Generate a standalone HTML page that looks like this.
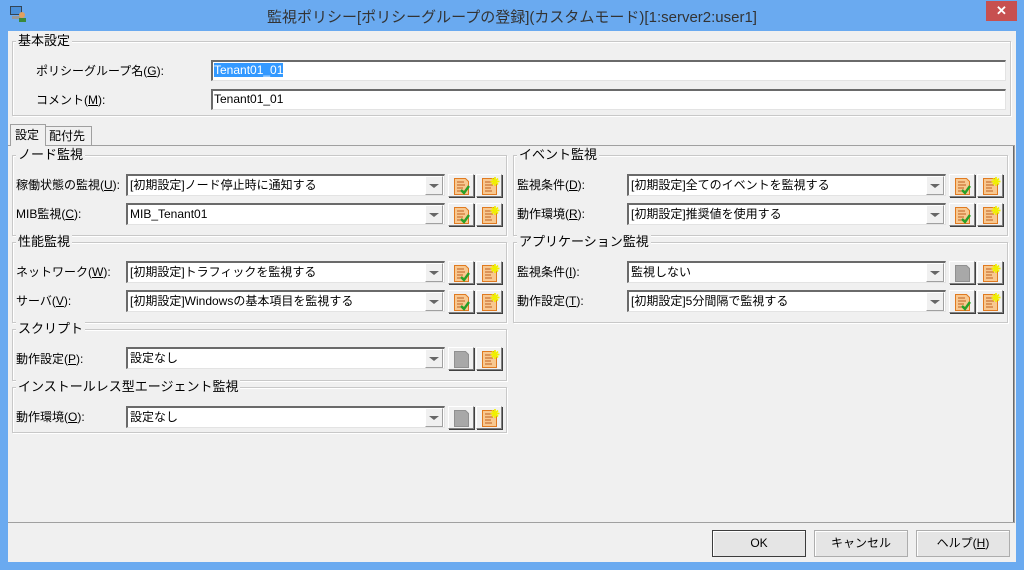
<!DOCTYPE html>
<html><head><meta charset="utf-8"><style>
*{box-sizing:border-box;margin:0;padding:0}
body{width:1024px;height:570px;background:#6aaaf0;position:relative;overflow:hidden;font-family:"Liberation Sans","Noto Sans CJK JP",sans-serif;font-size:12px;color:#000}
.a{position:absolute}
.client{left:8px;top:31px;width:1008px;height:531px;background:#f0f0f0}
.title{left:0;top:6px;width:1024px;text-align:center;font-size:15px;color:#333}
.close{left:986px;top:1px;width:31px;height:20px;background:#c75050;color:#fff;text-align:center;font-size:13px;line-height:20px;font-weight:bold}
.grp{border:1px solid #c8c8c8;box-shadow:inset 1px 1px 0 #fff,1px 1px 0 #fff}
.leg{background:#f0f0f0;padding:0 2px;top:-9px;left:3px;line-height:16px;font-size:13px}
.inp{background:#fff;border:1px solid #e3e3e3;border-top:2px solid #6a6a6a;border-left:2px solid #6a6a6a;padding-left:1px;line-height:17px;white-space:nowrap;overflow:hidden}
.sel{background:#fff;border:1px solid #e3e3e3;border-top:2px solid #6a6a6a;border-left:2px solid #6a6a6a;height:22px;line-height:19px;padding-left:2px}
.arr{position:absolute;right:1px;top:0px;width:18px;height:19px;background:#f0f0f0;border:1px solid;border-color:#fff #a0a0a0 #a0a0a0 #fff}
.arr:after{content:"";position:absolute;left:3px;top:7px;border:5px solid transparent;border-top:4px solid #666;border-bottom:0}
.btn{width:26px;height:23px;border:1px solid;border-color:#fff #808080 #808080 #fff;box-shadow:1px 1px 0 #404040;background:#f0f0f0}
.btn svg{position:absolute;left:4px;top:2px}
.lbl{line-height:16px}
.pb{border:1px solid #adadad;background:#e5e5e5;text-align:center;line-height:25px;width:94px;height:27px;box-shadow:inset 1px 1px 0 #fff}
</style></head><body>
<div class="a client"></div>
<svg class="a" style="left:9px;top:5px" width="18" height="18"><rect x="1" y="1" width="12" height="9" fill="#345" /><rect x="2" y="2" width="10" height="7" fill="#4a8fd8"/><rect x="3" y="11" width="9" height="3" fill="#999"/><circle cx="13" cy="10" r="3" fill="#e0a060"/><rect x="10" y="13" width="7" height="4" fill="#3a8a3a"/></svg>
<div class="a title">監視ポリシー[ポリシーグループの登録](カスタムモード)[1:server2:user1]</div>
<div class="a close">✕</div>

<div class="a grp" style="left:12px;top:41px;width:999px;height:75px"><div class="a leg">基本設定</div></div>
<div class="a lbl" style="left:36px;top:63px">ポリシーグループ名(<u>G</u>):</div>
<div class="a inp" style="left:211px;top:60px;width:795px;height:21px"><span style="background:#3399ff;color:#fff">Tenant01_01</span></div>
<div class="a lbl" style="left:36px;top:92px">コメント(<u>M</u>):</div>
<div class="a inp" style="left:211px;top:89px;width:795px;height:21px">Tenant01_01</div>

<div class="a" style="left:8px;top:145px;width:1007px;height:378px;border:1px solid #a0a0a0;border-left:0;box-shadow:inset -1px 0 0 #696969"></div>
<div class="a" style="left:10px;top:124px;width:36px;height:22px;background:#f0f0f0;border:1px solid #a0a0a0;border-bottom:0;line-height:20px;padding-left:4px">設定</div>
<div class="a" style="left:46px;top:126px;width:46px;height:19px;border:1px solid #a0a0a0;border-bottom:0;border-left:0;line-height:18px;padding-left:3px">配付先</div>

<div class="a grp" style="left:12px;top:155px;width:495px;height:81px"><div class="a leg">ノード監視</div></div>
<div class="a grp" style="left:513px;top:155px;width:495px;height:81px"><div class="a leg">イベント監視</div></div>
<div class="a grp" style="left:12px;top:242px;width:495px;height:81px"><div class="a leg">性能監視</div></div>
<div class="a grp" style="left:513px;top:242px;width:495px;height:81px"><div class="a leg">アプリケーション監視</div></div>
<div class="a grp" style="left:12px;top:329px;width:495px;height:52px"><div class="a leg">スクリプト</div></div>
<div class="a grp" style="left:12px;top:387px;width:495px;height:46px"><div class="a leg">インストールレス型エージェント監視</div></div>

<svg width="0" height="0" style="position:absolute"><defs>
<g id="doc"><path d="M1.5 1.5h11l3 3v13h-14z" fill="#f8c890" stroke="#e07a20"/><path d="M4 5h7M4 8h8M4 11h6M4 14h7" stroke="#c06020"/></g>
<g id="ed"><use href="#doc"/><path d="M8 13l3 3 5-7" stroke="#28a028" stroke-width="2.4" fill="none"/></g>
<g id="nw"><use href="#doc"/><path d="M14 0v9M9.5 4.5h9M11 1.5l6 6M17 1.5l-6 6" stroke="#f0f000" stroke-width="1.7"/></g>
<g id="dis"><path d="M1.5 1.5h11l3 3v13h-14z" fill="#a8a8a8" stroke="#909090"/></g>
</defs></svg>

<div class="a lbl" style="left:16px;top:177px">稼働状態の監視(<u>U</u>):</div>
<div class="a sel" style="left:126px;top:174px;width:319px">[初期設定]ノード停止時に通知する<div class="arr"></div></div>
<div class="a btn" style="left:448px;top:174px"><svg width="19" height="19"><use href="#ed"/></svg></div>
<div class="a btn" style="left:476px;top:174px"><svg width="19" height="19"><use href="#nw"/></svg></div>

<div class="a lbl" style="left:16px;top:206px">MIB監視(<u>C</u>):</div>
<div class="a sel" style="left:126px;top:203px;width:319px">MIB_Tenant01<div class="arr"></div></div>
<div class="a btn" style="left:448px;top:203px"><svg width="19" height="19"><use href="#ed"/></svg></div>
<div class="a btn" style="left:476px;top:203px"><svg width="19" height="19"><use href="#nw"/></svg></div>

<div class="a lbl" style="left:16px;top:264px">ネットワーク(<u>W</u>):</div>
<div class="a sel" style="left:126px;top:261px;width:319px">[初期設定]トラフィックを監視する<div class="arr"></div></div>
<div class="a btn" style="left:448px;top:261px"><svg width="19" height="19"><use href="#ed"/></svg></div>
<div class="a btn" style="left:476px;top:261px"><svg width="19" height="19"><use href="#nw"/></svg></div>

<div class="a lbl" style="left:16px;top:293px">サーバ(<u>V</u>):</div>
<div class="a sel" style="left:126px;top:290px;width:319px">[初期設定]Windowsの基本項目を監視する<div class="arr"></div></div>
<div class="a btn" style="left:448px;top:290px"><svg width="19" height="19"><use href="#ed"/></svg></div>
<div class="a btn" style="left:476px;top:290px"><svg width="19" height="19"><use href="#nw"/></svg></div>

<div class="a lbl" style="left:16px;top:351px">動作設定(<u>P</u>):</div>
<div class="a sel" style="left:126px;top:347px;width:319px">設定なし<div class="arr"></div></div>
<div class="a btn" style="left:448px;top:347px"><svg width="19" height="19"><use href="#dis"/></svg></div>
<div class="a btn" style="left:476px;top:347px"><svg width="19" height="19"><use href="#nw"/></svg></div>

<div class="a lbl" style="left:16px;top:409px">動作環境(<u>O</u>):</div>
<div class="a sel" style="left:126px;top:406px;width:319px">設定なし<div class="arr"></div></div>
<div class="a btn" style="left:448px;top:406px"><svg width="19" height="19"><use href="#dis"/></svg></div>
<div class="a btn" style="left:476px;top:406px"><svg width="19" height="19"><use href="#nw"/></svg></div>

<div class="a lbl" style="left:517px;top:177px">監視条件(<u>D</u>):</div>
<div class="a sel" style="left:627px;top:174px;width:319px">[初期設定]全てのイベントを監視する<div class="arr"></div></div>
<div class="a btn" style="left:949px;top:174px"><svg width="19" height="19"><use href="#ed"/></svg></div>
<div class="a btn" style="left:977px;top:174px"><svg width="19" height="19"><use href="#nw"/></svg></div>

<div class="a lbl" style="left:517px;top:206px">動作環境(<u>R</u>):</div>
<div class="a sel" style="left:627px;top:203px;width:319px">[初期設定]推奨値を使用する<div class="arr"></div></div>
<div class="a btn" style="left:949px;top:203px"><svg width="19" height="19"><use href="#ed"/></svg></div>
<div class="a btn" style="left:977px;top:203px"><svg width="19" height="19"><use href="#nw"/></svg></div>

<div class="a lbl" style="left:517px;top:264px">監視条件(<u>I</u>):</div>
<div class="a sel" style="left:627px;top:261px;width:319px">監視しない<div class="arr"></div></div>
<div class="a btn" style="left:949px;top:261px"><svg width="19" height="19"><use href="#dis"/></svg></div>
<div class="a btn" style="left:977px;top:261px"><svg width="19" height="19"><use href="#nw"/></svg></div>

<div class="a lbl" style="left:517px;top:293px">動作設定(<u>T</u>):</div>
<div class="a sel" style="left:627px;top:290px;width:319px">[初期設定]5分間隔で監視する<div class="arr"></div></div>
<div class="a btn" style="left:949px;top:290px"><svg width="19" height="19"><use href="#ed"/></svg></div>
<div class="a btn" style="left:977px;top:290px"><svg width="19" height="19"><use href="#nw"/></svg></div>

<div class="a pb" style="left:712px;top:530px;border:1px solid #3c3c3c">OK</div>
<div class="a pb" style="left:814px;top:530px">キャンセル</div>
<div class="a pb" style="left:916px;top:530px">ヘルプ(<u>H</u>)</div>
</body></html>
